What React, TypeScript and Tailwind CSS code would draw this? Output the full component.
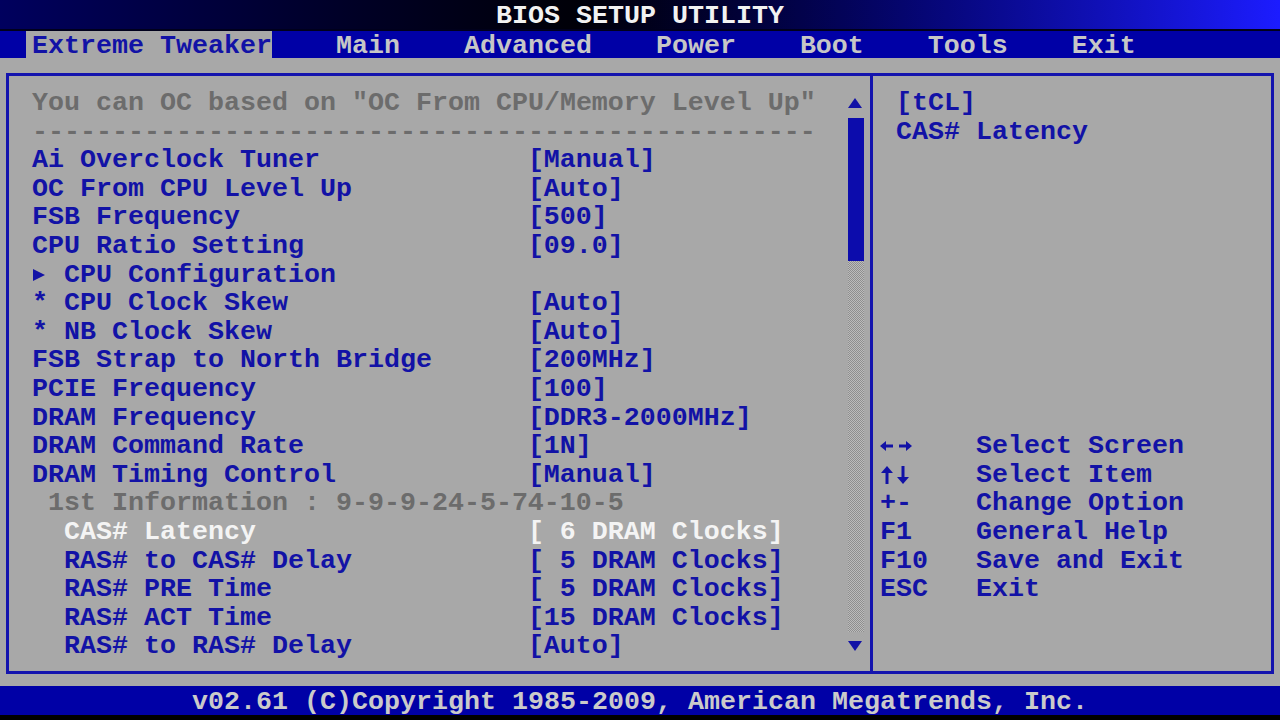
import React from "react";

type Tone = "blue" | "gray" | "white";
type Row = {
  label: string;
  value?: string;
  indent?: number; // columns past the base column
  tone?: Tone;
  mark?: "arrow";
};

const rows: Row[] = [
  { label: 'You can OC based on "OC From CPU/Memory Level Up"', tone: "gray" },
  { label: "-".repeat(49), tone: "gray" },
  { label: "Ai Overclock Tuner", value: "[Manual]" },
  { label: "OC From CPU Level Up", value: "[Auto]" },
  { label: "FSB Frequency", value: "[500]" },
  { label: "CPU Ratio Setting", value: "[09.0]" },
  { label: "CPU Configuration", mark: "arrow", indent: 2 },
  { label: "* CPU Clock Skew", value: "[Auto]" },
  { label: "* NB Clock Skew", value: "[Auto]" },
  { label: "FSB Strap to North Bridge", value: "[200MHz]" },
  { label: "PCIE Frequency", value: "[100]" },
  { label: "DRAM Frequency", value: "[DDR3-2000MHz]" },
  { label: "DRAM Command Rate", value: "[1N]" },
  { label: "DRAM Timing Control", value: "[Manual]" },
  { label: "1st Information : 9-9-9-24-5-74-10-5", tone: "gray", indent: 1 },
  { label: "CAS# Latency", value: "[ 6 DRAM Clocks]", indent: 2, tone: "white" },
  { label: "RAS# to CAS# Delay", value: "[ 5 DRAM Clocks]", indent: 2 },
  { label: "RAS# PRE Time", value: "[ 5 DRAM Clocks]", indent: 2 },
  { label: "RAS# ACT Time", value: "[15 DRAM Clocks]", indent: 2 },
  { label: "RAS# to RAS# Delay", value: "[Auto]", indent: 2 },
];

const BLUE = "#1212a6";

// Bold little key-glyphs of the help legend
function LeftRight() {
  return (
    <svg width="32" height="12" viewBox="0 0 32 12">
      <polygon points="0,6 6,1 6,11" fill={BLUE} />
      <rect x="5" y="4.5" width="8" height="3" fill={BLUE} />
      <polygon points="32,6 26,1 26,11" fill={BLUE} />
      <rect x="19" y="4.5" width="8" height="3" fill={BLUE} />
    </svg>
  );
}

function UpDown() {
  return (
    <svg width="32" height="18" viewBox="0 0 32 18">
      <polygon points="7,0 1,7 13,7" fill={BLUE} />
      <rect x="5.5" y="6" width="3" height="12" fill={BLUE} />
      <polygon points="23,18 17,11 29,11" fill={BLUE} />
      <rect x="21.5" y="0" width="3" height="12" fill={BLUE} />
    </svg>
  );
}

const legend: [React.ReactNode, string][] = [
  [<LeftRight />, "Select Screen"],
  [<UpDown />, "Select Item"],
  ["+-", "Change Option"],
  ["F1", "General Help"],
  ["F10", "Save and Exit"],
  ["ESC", "Exit"],
];

const toneClass: Record<Tone, string> = {
  blue: "text-[#1212a6]",
  gray: "text-[#6c6c6c]",
  white: "text-[#f4f4f4]",
};

const indentClass = ["pl-0", "pl-[1ch]", "pl-[2ch]"];

function Triangle({ dir }: { dir: "up" | "down" | "right" }) {
  if (dir === "right") {
    return (
      <svg width="14" height="14" viewBox="0 0 14 14" className="shrink-0">
        <polygon points="1,1 13,7 1,13" fill={BLUE} />
      </svg>
    );
  }
  return (
    <svg width="14" height="10" viewBox="0 0 14 10" className="shrink-0">
      {dir === "up" ? (
        <polygon points="7,0 14,10 0,10" fill={BLUE} />
      ) : (
        <polygon points="0,0 14,0 7,10" fill={BLUE} />
      )}
    </svg>
  );
}

function SetupRow({ row }: { row: Row }) {
  const tone = toneClass[row.tone ?? "blue"];
  const pad = indentClass[row.indent ?? 0];
  return (
    <div className={`flex h-[28.6px] items-center whitespace-pre ${tone}`}>
      {row.mark === "arrow" ? (
        <>
          <span className="flex w-[2ch] items-center">
            <Triangle dir="right" />
          </span>
          <span className="w-[29ch]">{row.label}</span>
        </>
      ) : (
        <span className={`${row.value ? "w-[31ch]" : ""} ${pad}`}>{row.label}</span>
      )}
      {row.value && <span>{row.value}</span>}
    </div>
  );
}

export default function App() {
  return (
    <div className="h-[720px] w-[1280px] overflow-hidden bg-black font-['Liberation_Mono',monospace] text-[26.667px] leading-[28.6px] font-bold">
      {/* title bar */}
      <div className="flex h-[31px] items-center justify-center border-b-2 border-[#00001c] bg-linear-to-r from-[#00005e] via-[#000008] via-45% to-[#1c1cff] pt-[4px] text-[#f2f2f2]">
        BIOS SETUP UTILITY
      </div>

      {/* menu tabs */}
      <div className="flex h-[27px] items-stretch whitespace-pre bg-[#0000a6] pl-[26px] text-[#c6c6c6]">
        <div className="w-[310px]">
          <span className="flex h-full w-[246px] items-center bg-[#a8a8a8] pt-[3px] pl-[6px] text-[#1212a6]">
            Extreme Tweaker
          </span>
        </div>
        <span className="flex w-[8ch] items-center pt-[3px]">Main</span>
        <span className="flex w-[12ch] items-center pt-[3px]">Advanced</span>
        <span className="flex w-[9ch] items-center pt-[3px]">Power</span>
        <span className="flex w-[8ch] items-center pt-[3px]">Boot</span>
        <span className="flex w-[9ch] items-center pt-[3px]">Tools</span>
        <span className="flex items-center pt-[3px]">Exit</span>
      </div>

      {/* main area */}
      <div className="h-[628px] bg-[#a8a8a8] px-[6px] pt-[15px] pb-[12px]">
        <div className="flex h-[601px] border-[3px] border-[#1414ae]">
          {/* settings list + scrollbar */}
          <div className="flex w-[861px] shrink-0">
            <div className="w-[839px] pt-[13px] pl-[23px]">
              {rows.map((r, i) => (
                <SetupRow key={i} row={r} />
              ))}
            </div>
            <div className="flex w-[16px] flex-col pt-[13px]">
              <div className="flex h-[28.6px] items-center">
                <Triangle dir="up" />
              </div>
              <div className="flex h-[514px] flex-col">
                <div className="h-[143px] bg-[#0c0cac]" />
                <div className="flex-1 bg-[image:repeating-conic-gradient(#8e8e8e_0%_25%,#bcbcbc_0%_50%)] bg-[length:2px_2px]" />
              </div>
              <div className="flex h-[28.6px] items-center">
                <Triangle dir="down" />
              </div>
            </div>
          </div>

          <div className="w-[3px] shrink-0 bg-[#1414ae]" />

          {/* help panel */}
          <div className="flex-1 whitespace-pre pt-[13px] pl-[7px] text-[#1212a6]">
            <div className="h-[28.6px] pl-[1ch]">[tCL]</div>
            <div className="h-[28.6px] pl-[1ch]">CAS# Latency</div>
            <div className="h-[286px]" />
            {legend.map(([k, d], i) => (
              <div key={i} className="flex h-[28.6px] items-center">
                <span className="flex w-[6ch] items-center">{k}</span>
                <span>{d}</span>
              </div>
            ))}
          </div>
        </div>
      </div>

      {/* footer */}
      <div className="flex h-[29px] items-center justify-center whitespace-pre bg-[#0000a6] pt-[3px] text-[#cacaca]">
        v02.61 (C)Copyright 1985-2009, American Megatrends, Inc.
      </div>
    </div>
  );
}
